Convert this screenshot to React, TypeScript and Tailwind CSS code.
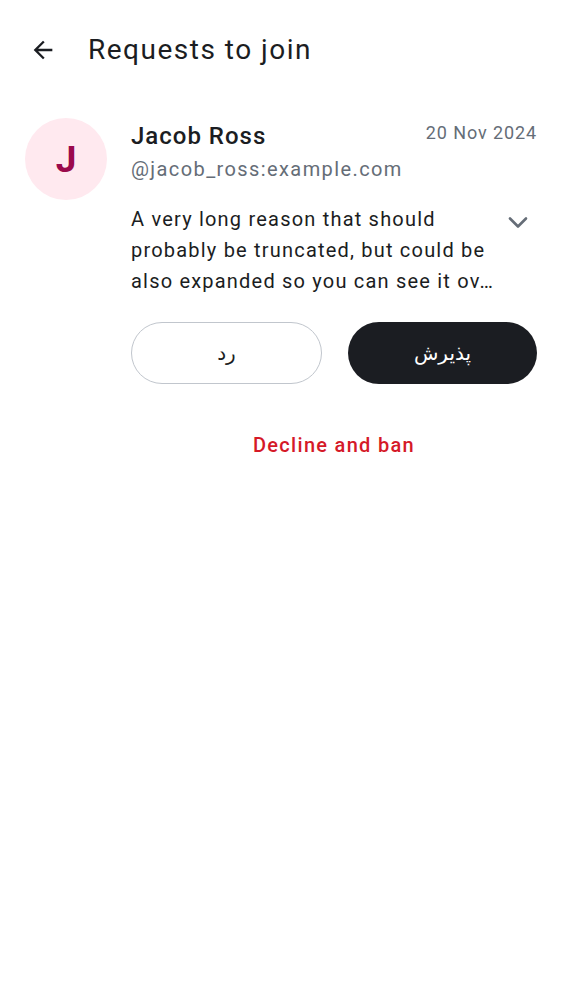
import React from "react";

export default function App() {
  return (
    <div className="w-[562px] h-[1000px] bg-white" style={{ fontFamily: "Roboto, 'Noto Sans', 'DejaVu Sans', sans-serif" }}>
      <div className="flex items-center h-[100px] pl-[29px]">
        <svg width="28" height="28" viewBox="0 0 24 24" className="text-[#1b1d22]">
          <path d="M20 11H7.83l5.59-5.59L12 4l-8 8 8 8 1.41-1.41L7.83 13H20v-2z" fill="currentColor" />
        </svg>
        <div className="ml-[31px] text-[28px] tracking-[1.5px] text-[#1b1d22] leading-none">Requests to join</div>
      </div>
      <div className="flex px-[25px] pt-[18px]">
        <div className="w-[82px] h-[82px] rounded-full bg-[#ffe9ef] flex items-center justify-center shrink-0">
          <span className="text-[#9b0a4c] text-[37px] font-bold leading-none">J</span>
        </div>
        <div className="flex-1 ml-[24px] pr-[0px]">
          <div className="flex items-start justify-between">
            <div className="pt-[3px]">
              <div className="text-[24px] tracking-[1px] font-medium text-[#1b1d22] leading-[30px]">Jacob Ross</div>
              <div className="text-[20px] tracking-[1.4px] text-[#656d77] leading-[30px] mt-[3px]">@jacob_ross:example.com</div>
            </div>
            <div className="text-[18px] tracking-[0.9px] text-[#656d77] leading-[26px] pt-[2px]">20 Nov 2024</div>
          </div>
          <div className="flex items-start mt-[20px]">
            <div className="w-[368px] text-[20px] tracking-[1.2px] leading-[31px] text-[#1b1d22]">
              A very long reason that should probably be truncated, but could be also expanded so you can see it ov…
            </div>
            <svg width="22" height="14" viewBox="0 0 22 14" className="ml-[8px] mt-[11px]">
              <path d="M3 3.5l8 8 8-8" fill="none" stroke="#656d77" strokeWidth="2.6" strokeLinecap="round" strokeLinejoin="round" />
            </svg>
          </div>
          <div className="flex gap-[26px] mt-[25px]">
            <button className="flex-1 h-[62px] rounded-full border border-[#c1c6cd] text-[#1b1d22] text-[20px] flex items-center justify-center">
              رد
            </button>
            <button className="flex-1 h-[62px] rounded-full bg-[#1b1d22] text-white text-[20px] flex items-center justify-center">
              پذیرش
            </button>
          </div>
          <div className="flex justify-center mt-[49px]">
            <span className="text-[#d51928] text-[20px] tracking-[1.3px] leading-[24px] font-medium">Decline and ban</span>
          </div>
        </div>
      </div>
    </div>
  );
}
